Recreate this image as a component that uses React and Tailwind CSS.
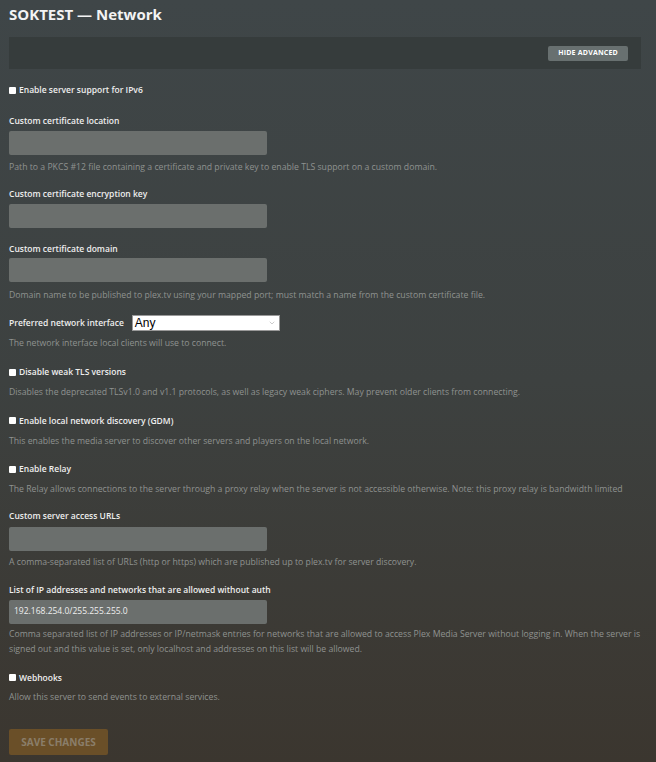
import { ChevronDown } from 'lucide-react';

function Check({ label }) {
  return (
    <label className="flex items-center gap-[3px] text-[8.5px] font-semibold text-[#eeeeee] leading-none">
      <span className="inline-block w-[7px] h-[7px] bg-white rounded-[1px]" />
      {label}
    </label>
  );
}

function Help({ children, className = '' }) {
  return <p className={`text-[8.7px] leading-[15px] text-[#8f9290] ${className}`}>{children}</p>;
}

function Field({ label, value, gap = 'mt-[6px]' }) {
  return (
    <div>
      <div className="text-[8.5px] font-semibold text-[#eeeeee] leading-none">{label}</div>
      <div className={`${gap} w-[258px] h-[24px] bg-[#6b6f6d] rounded-[2px] flex items-center px-[5px] text-[8.5px] text-[#eeeeee]`}>
        {value}
      </div>
    </div>
  );
}

export default function App() {
  return (
    <div
      className="w-[656px] h-[762px] overflow-hidden pl-[9px] pr-[14px] pt-[5px] bg-gradient-to-b from-[#3f4648] via-[#3d4140] to-[#3b362f]"
      style={{ fontFamily: '"Open Sans", sans-serif' }}
    >
      <h1 className="text-[15px] font-bold text-[#f3f3f3] leading-[18px]">SOKTEST — Network</h1>

      <div className="mt-[14px] w-[632px] h-[32px] bg-[#363c3c] flex items-center justify-end pr-[13px]">
        <button className="h-[15px] px-[10px] bg-[#687070] rounded-[2px] text-[7px] font-bold text-white uppercase tracking-[0.2px]">
          Hide Advanced
        </button>
      </div>

      <div className="mt-[17px]">
        <Check label="Enable server support for IPv6" />
      </div>

      <div className="mt-[22px]">
        <Field label="Custom certificate location" />
        <Help className="mt-[5px]">
          Path to a PKCS #12 file containing a certificate and private key to enable TLS support on a custom domain.
        </Help>
      </div>

      <div className="mt-[15px]">
        <Field label="Custom certificate encryption key" gap="mt-[5px]" />
      </div>

      <div className="mt-[17px]">
        <Field label="Custom certificate domain" gap="mt-[5px]" />
        <Help className="mt-[6px]">
          Domain name to be published to plex.tv using your mapped port; must match a name from the custom certificate file.
        </Help>
      </div>

      <div className="mt-[12px] flex items-center gap-[8px]">
        <span className="text-[8.5px] font-semibold text-[#eeeeee]">Preferred network interface</span>
        <div
          className="w-[148px] h-[16px] bg-white border border-[#999] flex items-center justify-between pl-[2px] pr-[3px] text-[12px] text-black"
          style={{ fontFamily: '"Liberation Sans", Arial, sans-serif' }}
        >
          Any
          <ChevronDown size={8} strokeWidth={1.5} className="text-[#999]" />
        </div>
      </div>
      <Help className="mt-[5px]">The network interface local clients will use to connect.</Help>

      <div className="mt-[17px]">
        <Check label="Disable weak TLS versions" />
        <Help className="mt-[8px]">
          Disables the deprecated TLSv1.0 and v1.1 protocols, as well as legacy weak ciphers. May prevent older clients from connecting.
        </Help>
      </div>

      <div className="mt-[17px]">
        <Check label="Enable local network discovery (GDM)" />
        <Help className="mt-[9px]">
          This enables the media server to discover other servers and players on the local network.
        </Help>
      </div>

      <div className="mt-[16px]">
        <Check label="Enable Relay" />
        <Help className="mt-[8px]">
          The Relay allows connections to the server through a proxy relay when the server is not accessible otherwise. Note: this proxy relay is bandwidth limited
        </Help>
      </div>

      <div className="mt-[15px]">
        <Field label="Custom server access URLs" gap="mt-[7px]" />
        <Help className="mt-[4px]">
          A comma-separated list of URLs (http or https) which are published up to plex.tv for server discovery.
        </Help>
      </div>

      <div className="mt-[16px]">
        <Field label="List of IP addresses and networks that are allowed without auth" value="192.168.254.0/255.255.255.0" gap="mt-[5px]" />
        <Help className="mt-[3px]">
          Comma separated list of IP addresses or IP/netmask entries for networks that are allowed to access Plex Media Server without logging in. When the server is signed out and this value is set, only localhost and addresses on this list will be allowed.
        </Help>
      </div>

      <div className="mt-[17px]">
        <Check label="Webhooks" />
        <Help className="mt-[8px]">Allow this server to send events to external services.</Help>
      </div>

      <button className="mt-[24px] w-[99px] h-[26px] bg-[#6a4f28] rounded-[2px] text-[10px] font-bold text-[#8a7e6a] uppercase">
        Save Changes
      </button>
    </div>
  );
}
